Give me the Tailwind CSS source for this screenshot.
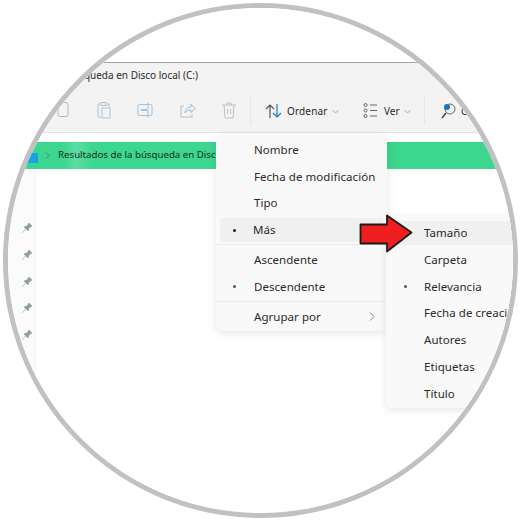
<!DOCTYPE html>
<html lang="es">
<head>
<meta charset="utf-8">
<script src="https://cdn.jsdelivr.net/npm/@tailwindcss/browser@4"></script>
<title>Ordenar</title>
</head>
<body class="bg-white">
<div class="w-[520px] h-[520px] bg-white pt-[3px] pl-[3px] font-['Noto_Sans','Open_Sans',sans-serif] text-[#2a2a2a]">
  <div class="relative w-[515px] h-[515px] rounded-full border-[5px] border-[#c1c1c1] overflow-hidden bg-white">
    <div class="h-[54px] bg-white border-b border-[#a3a3a3] box-content"></div>
    <div class="bg-[#f3f3f3] h-[69px] border-b border-[#e3e3e3] box-content">
      <div class="h-[24px] w-[190px] flex items-center justify-end whitespace-nowrap text-[10px]">Resultados de la búsqueda en Disco local (C:)</div>
      <div class="h-[45px] relative">
        <svg class="absolute left-[46px] top-[14px]" width="18" height="20" viewBox="0 0 18 20" fill="none" stroke="#a8b6c0"><rect x="4" y="1.500" width="10" height="14" rx="2"/></svg>
        <svg class="absolute left-[87px] top-[14px]" width="18" height="20" viewBox="0 0 18 20" fill="none" stroke="#b4c0c8"><path d="M5 3H3v13h3"/><path d="M12 3h2v3"/><rect x="6" y="1.500" width="5" height="3"/><rect x="7" y="7" width="8" height="10" stroke="#9ccbea"/></svg>
        <svg class="absolute left-[128px] top-[14px]" width="18" height="20" viewBox="0 0 18 20" fill="none" stroke="#9fc0d8"><rect x="2" y="3.500" width="14" height="11" rx="1.500"/><path d="M5 9h6" stroke="#5b92bf"/><path d="M12 1.500v15"/></svg>
        <svg class="absolute left-[170px] top-[14px]" width="18" height="20" viewBox="0 0 18 20" fill="none" stroke="#b0c0cc"><path d="M6 5H3v11h11v-3"/><path d="M7 12c0-4 3-6 6-6V3l4 4.500-4 4V9c-3 0-5 1-6 3z" stroke="#99c0dc"/></svg>
        <svg class="absolute left-[212px] top-[14px]" width="18" height="20" viewBox="0 0 18 20" fill="none" stroke="#bcc2c5"><path d="M2 4h14M7 4V2h4v2M4 4l1 13h8l1-13M7.500 8v5M10.500 8v5"/></svg>
        <div class="absolute left-[242px] top-[10px] w-px h-[28px] bg-[#e6e6e6]"></div>
        <svg class="absolute left-[257px] top-[16px]" width="17" height="16" viewBox="0 0 17 16" fill="none" stroke-width="1.200"><path d="M5 15V2M1 6l4-4 4 4" stroke="#555"/><path d="M12 1v13M8 10l4 4 4-4" stroke="#1a7fc4"/></svg>
        <span class="absolute left-[279px] top-[16px] text-[10px] tracking-[0.150px] leading-[16px]">Ordenar</span>
        <svg class="absolute left-[324px] top-[22px]" width="7" height="5" viewBox="0 0 7 5" fill="none" stroke="#aaa"><path d="M.5 1l3 3 3-3"/></svg>
        <svg class="absolute left-[355px] top-[15px]" width="15" height="17" viewBox="0 0 15 17" fill="none" stroke="#666"><circle cx="2.500" cy="3" r="1.500"/><circle cx="2.500" cy="8.500" r="1.500"/><circle cx="2.500" cy="14" r="1.500"/><path d="M7 3h7M7 8.500h7M7 14h7"/></svg>
        <span class="absolute left-[376px] top-[16px] text-[10px] leading-[16px]">Ver</span>
        <svg class="absolute left-[396px] top-[22px]" width="7" height="5" viewBox="0 0 7 5" fill="none" stroke="#aaa"><path d="M.5 1l3 3 3-3"/></svg>
        <div class="absolute left-[416px] top-[10px] w-px h-[28px] bg-[#e6e6e6]"></div>
        <svg class="absolute left-[433px] top-[15px]" width="16" height="18" viewBox="0 0 16 18" fill="none"><circle cx="9" cy="7" r="5" stroke="#666"/><path d="M5 11l-4 5" stroke="#444" stroke-width="1.500"/><circle cx="6" cy="5" r="3" fill="#1477c0"/></svg>
        <span class="absolute left-[453px] top-[16px] text-[10px] leading-[16px]">Con</span>
      </div>
    </div>
    <div class="h-[9px] bg-white"></div>
    <div class="h-[27px] flex items-center bg-[linear-gradient(90deg,#3dd68f_0,#3dd68f_55px,#5bdda3_68px,#3dd68f_85px,#3dd68f_100%)]">
      <svg class="ml-[16px]" width="15" height="16" viewBox="0 0 15 16"><path d="M0 3h5l2 2h7v10H0z" fill="#1ba1e8"/></svg>
      <svg class="ml-[6px]" width="5" height="7" viewBox="0 0 5 7" fill="none" stroke="#55806c"><path d="M1 .5l3 3-3 3"/></svg>
      <span class="ml-[8px] text-[9.700px] whitespace-nowrap text-[#0f2f21]">Resultados de la búsqueda en Disco local (C:)</span>
    </div>
    <div class="flex h-[340px]">
      <div class="w-[24px] bg-[#fbfbfb] border-r border-[#f3f3f3] flex flex-col items-end pr-[3px] pt-[54px] gap-[16.800px] box-content">
        <svg width="10" height="10" viewBox="0 0 10 10"><path d="M0 10l3.500-4M2 4l4 4 1-3 3-2-3-3-2 3z" fill="#8e9e9c" stroke="#8e9e9c" stroke-width=".6"/></svg>
        <svg width="10" height="10" viewBox="0 0 10 10"><path d="M0 10l3.500-4M2 4l4 4 1-3 3-2-3-3-2 3z" fill="#8e9e9c" stroke="#8e9e9c" stroke-width=".6"/></svg>
        <svg width="10" height="10" viewBox="0 0 10 10"><path d="M0 10l3.500-4M2 4l4 4 1-3 3-2-3-3-2 3z" fill="#8e9e9c" stroke="#8e9e9c" stroke-width=".6"/></svg>
        <svg width="10" height="10" viewBox="0 0 10 10"><path d="M0 10l3.500-4M2 4l4 4 1-3 3-2-3-3-2 3z" fill="#8e9e9c" stroke="#8e9e9c" stroke-width=".6"/></svg>
        <svg width="10" height="10" viewBox="0 0 10 10"><path d="M0 10l3.500-4M2 4l4 4 1-3 3-2-3-3-2 3z" fill="#8e9e9c" stroke="#8e9e9c" stroke-width=".6"/></svg>
      </div>
      <div class="flex-1 bg-white"></div>
    </div>

    <!-- Menú Ordenar -->
    <div class="absolute left-[208px] top-[126px] w-[171px] h-[197px] bg-[#f9f9f9] rounded-[6px] shadow-[0_2px_8px_rgba(0,0,0,0.10)] pt-[2px] text-[11.500px] tracking-[0.050px]">
      <div class="h-[27px] flex items-center pl-[38px]">Nombre</div>
      <div class="h-[26.500px] flex items-center pl-[38px] whitespace-nowrap">Fecha de modificación</div>
      <div class="h-[26.500px] flex items-center pl-[38px]">Tipo</div>
      <div class="h-[24px] mx-[4px] my-[2px] rounded-[4px] bg-[#f0f0f0] flex items-center relative pl-[33px]"><span class="absolute left-[13px] w-[3px] h-[3px] rounded-full bg-[#222]"></span>Más</div>
      <div class="h-px bg-[#eaeaea] mt-[2px]"></div>
      <div class="h-[27px] mt-[1px] flex items-center pl-[38px]">Ascendente</div>
      <div class="h-[27px] flex items-center pl-[38px] relative"><span class="absolute left-[17px] w-[3px] h-[3px] rounded-full bg-[#555]"></span>Descendente</div>
      <div class="h-px bg-[#eaeaea] mt-[1px]"></div>
      <div class="h-[27px] mt-[1px] flex items-center justify-between pl-[38px] pr-[12px]">Agrupar por<svg width="6" height="9" viewBox="0 0 6 9" fill="none" stroke="#888"><path d="M1 .5l4 4-4 4"/></svg></div>
    </div>

    <!-- Submenú Más -->
    <div class="absolute left-[378px] top-[208px] w-[200px] h-[192px] bg-[#f9f9f9] rounded-[6px] shadow-[0_2px_8px_rgba(0,0,0,0.10)] pt-[4px] text-[11.500px] tracking-[0.050px]">
      <div class="h-[24px] ml-[4px] mt-[1px] mb-[1px] rounded-[4px] bg-[#f0f0f0] flex items-center pl-[34px]">Tamaño</div>
      <div class="h-[26.800px] flex items-center pl-[38px]">Carpeta</div>
      <div class="h-[26.800px] flex items-center pl-[38px] relative"><span class="absolute left-[18px] w-[3px] h-[3px] rounded-full bg-[#555]"></span>Relevancia</div>
      <div class="h-[26.800px] flex items-center pl-[38px] whitespace-nowrap">Fecha de creación</div>
      <div class="h-[26.800px] flex items-center pl-[38px]">Autores</div>
      <div class="h-[26.800px] flex items-center pl-[38px]">Etiquetas</div>
      <div class="h-[26.800px] flex items-center pl-[38px]">Título</div>
    </div>

    <!-- Flecha -->
    <svg class="absolute left-[351px] top-[206px]" width="54" height="40" viewBox="0 0 54 40"><path d="M1.500 10.500H28V1.500L52.500 18.500 28 37.500V29.500H1.500z" fill="#f01e1e" stroke="#1a1a1a" stroke-width="1.800" stroke-linejoin="round"/></svg>
  </div>
</div>
</body>
</html>
